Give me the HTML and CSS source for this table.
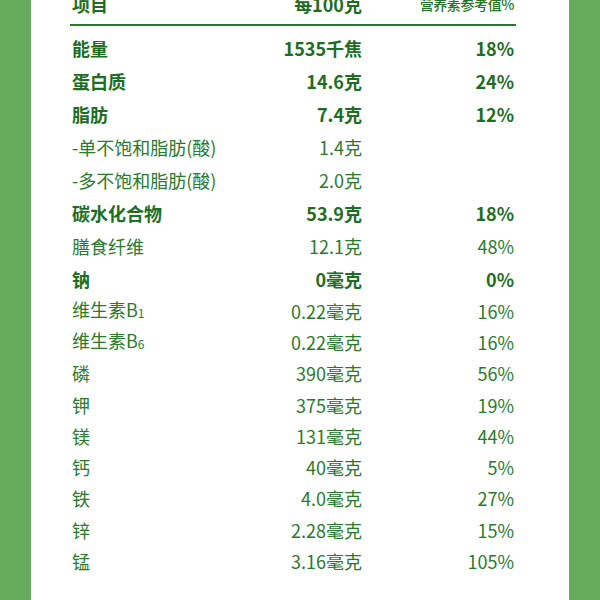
FILE: index.html
```html
<!DOCTYPE html>
<html lang="zh">
<head>
<meta charset="utf-8">
<link rel="stylesheet" href="styles.css">
</head>
<body>
<div class="panel">
  <div class="table">
    <div class="row head">
      <span class="name">项目</span>
      <span class="amt">每100克</span>
      <span class="pct small">营养素参考值%</span>
    </div>
    <div class="rule"></div>
    <div class="body">
      <div class="row b"><span class="name">能量</span><span class="amt">1535千焦</span><span class="pct">18%</span></div>
      <div class="row b"><span class="name">蛋白质</span><span class="amt">14.6克</span><span class="pct">24%</span></div>
      <div class="row b"><span class="name">脂肪</span><span class="amt">7.4克</span><span class="pct">12%</span></div>
      <div class="row"><span class="name">-单不饱和脂肪(酸)</span><span class="amt">1.4克</span><span class="pct"></span></div>
      <div class="row"><span class="name">-多不饱和脂肪(酸)</span><span class="amt">2.0克</span><span class="pct"></span></div>
      <div class="row b"><span class="name">碳水化合物</span><span class="amt">53.9克</span><span class="pct">18%</span></div>
      <div class="row"><span class="name">膳食纤维</span><span class="amt">12.1克</span><span class="pct">48%</span></div>
      <div class="row b"><span class="name">钠</span><span class="amt">0毫克</span><span class="pct">0%</span></div>
      <div class="row t"><span class="name">维生素B<span class="sub">1</span></span><span class="amt">0.22毫克</span><span class="pct">16%</span></div>
      <div class="row t"><span class="name">维生素B<span class="sub">6</span></span><span class="amt">0.22毫克</span><span class="pct">16%</span></div>
      <div class="row t"><span class="name">磷</span><span class="amt">390毫克</span><span class="pct">56%</span></div>
      <div class="row t"><span class="name">钾</span><span class="amt">375毫克</span><span class="pct">19%</span></div>
      <div class="row t"><span class="name">镁</span><span class="amt">131毫克</span><span class="pct">44%</span></div>
      <div class="row t"><span class="name">钙</span><span class="amt">40毫克</span><span class="pct">5%</span></div>
      <div class="row t"><span class="name">铁</span><span class="amt">4.0毫克</span><span class="pct">27%</span></div>
      <div class="row t"><span class="name">锌</span><span class="amt">2.28毫克</span><span class="pct">15%</span></div>
      <div class="row t"><span class="name">锰</span><span class="amt">3.16毫克</span><span class="pct">105%</span></div>
    </div>
  </div>
</div>
</body>
</html>
```
FILE: styles.css
```css
html, body {
  margin: 0;
  padding: 0;
  height: 600px;
  overflow: hidden;
  background: #66aa5b;
}
body {
  font-family: "Noto Sans CJK SC", "Noto Sans", sans-serif;
  color: #2a7a2c;
}
.panel {
  display: flow-root;
  margin: 0 31px;
  height: 600px;
  background: #ffffff;
  padding: 0 53px 0 39px;
  box-sizing: border-box;
}
.table {
  width: 446px;
}
.row {
  display: grid;
  grid-template-columns: 152px 140px 152px;
  align-items: center;
  height: 33px;
  font-size: 18px;
  line-height: 24px;
  font-weight: 400;
  white-space: nowrap;
}
.row.t {
  height: 31.3px;
}
.row.b {
  font-weight: 700;
  color: #1d6d22;
}
.row.head {
  height: 24px;
  margin-top: -8px;
  font-weight: 700;
  color: #1d6d22;
}
.name {
  padding-left: 2px;
}
.amt, .pct {
  text-align: right;
}
.small {
  font-size: 14px;
  letter-spacing: -0.4px;
  font-weight: 500;
  color: #237326;
}
.rule {
  margin-top: 8px;
  height: 2px;
  background: #2a7a2e;
}
.body {
  padding-top: 5px;
}
.sub {
  font-size: 12px;
  vertical-align: -1px;
}
```
